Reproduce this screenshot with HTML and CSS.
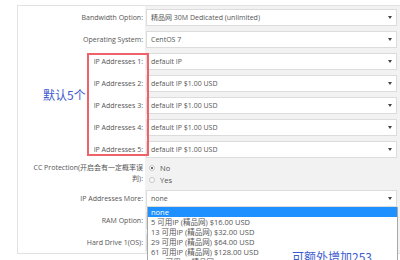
FILE: index.html
```html
<!DOCTYPE html>
<html>
<head>
<meta charset="utf-8">
<link rel="stylesheet" href="styles.css">
</head>
<body>
<div class="panel">
  <div class="row">
    <div class="label">Bandwidth Option:</div>
    <div class="field"><div class="select">精品网 30M Dedicated (unlimited)<span class="arrow"></span></div></div>
  </div>
  <div class="row">
    <div class="label">Operating System:</div>
    <div class="field"><div class="select">CentOS 7<span class="arrow"></span></div></div>
  </div>
  <div class="row">
    <div class="label">IP Addresses 1:</div>
    <div class="field"><div class="select">default IP<span class="arrow"></span></div></div>
  </div>
  <div class="row">
    <div class="label">IP Addresses 2:</div>
    <div class="field"><div class="select">default IP $1.00 USD<span class="arrow"></span></div></div>
  </div>
  <div class="row">
    <div class="label">IP Addresses 3:</div>
    <div class="field"><div class="select">default IP $1.00 USD<span class="arrow"></span></div></div>
  </div>
  <div class="row">
    <div class="label">IP Addresses 4:</div>
    <div class="field"><div class="select">default IP $1.00 USD<span class="arrow"></span></div></div>
  </div>
  <div class="row">
    <div class="label">IP Addresses 5:</div>
    <div class="field"><div class="select">default IP $1.00 USD<span class="arrow"></span></div></div>
  </div>
  <div class="row row-cc">
    <div class="label label-multi">CC Protection(开启会有一定概率误<br>判):</div>
    <div class="field radios">
      <div class="radio"><span class="dot checked"></span>No</div>
      <div class="radio"><span class="dot"></span>Yes</div>
    </div>
  </div>
  <div class="row">
    <div class="label">IP Addresses More:</div>
    <div class="field"><div class="select">none<span class="arrow"></span></div></div>
  </div>
  <div class="row">
    <div class="label">RAM Option:</div>
    <div class="field"><div class="select">&nbsp;<span class="arrow"></span></div></div>
  </div>
  <div class="row">
    <div class="label">Hard Drive 1(OS):</div>
    <div class="field"><div class="select">&nbsp;<span class="arrow"></span></div></div>
  </div>

  <div class="mark-box"></div>
  <div class="note note-left">默认5个</div>

  <ul class="dropdown">
    <li class="active">none</li>
    <li>5 可用IP (精品网) $16.00 USD</li>
    <li>13 可用IP (精品网) $32.00 USD</li>
    <li>29 可用IP (精品网) $64.00 USD</li>
    <li>61 可用IP (精品网) $128.00 USD</li>
    <li>125 可用IP (精品网) $256.00 USD</li>
  </ul>
  <div class="note note-right">可额外增加253</div>
</div>
</body>
</html>
```
FILE: styles.css
```css
html, body {
  margin: 0;
  padding: 0;
  background: #ffffff;
}
body {
  width: 400px;
  height: 260px;
  overflow: hidden;
  font-family: "Open Sans", "Noto Sans CJK SC", sans-serif;
  font-size: 7px;
  color: #555555;
}
.panel {
  position: relative;
  margin: 5px 0 0 17px;
  border: 1px solid #e2e2e2;
  border-right: none;
  background: #ffffff;
}
.row {
  display: grid;
  grid-template-columns: 127px 1fr;
  height: 22px;
}
.label {
  display: flex;
  align-items: center;
  justify-content: flex-end;
  padding-right: 2px;
  padding-top: 1px;
  text-align: right;
  white-space: nowrap;
}
.field {
  background: #f2f2f2;
  padding: 3px 3px 2px 1px;
}
.select {
  position: relative;
  box-sizing: border-box;
  height: 17px;
  line-height: 15px;
  border: 1px solid #dcdcdc;
  background: #ffffff;
  padding-left: 4px;
  color: #555555;
}
.arrow {
  position: absolute;
  right: 4px;
  top: 6px;
  width: 0;
  height: 0;
  border-left: 2px solid transparent;
  border-right: 2px solid transparent;
  border-top: 3px solid #444444;
}
.row-cc {
  height: 27px;
}
.label-multi {
  flex-direction: column;
  justify-content: flex-start;
  align-items: flex-end;
  line-height: 11px;
  padding-top: 2px;
}
.radios {
  padding-top: 2px;
  display: flex;
  flex-direction: column;
}
.radio {
  display: flex;
  align-items: center;
  height: 12px;
  padding-left: 3px;
  font-size: 7.5px;
}
.dot {
  box-sizing: border-box;
  width: 6px;
  height: 6px;
  border-radius: 50%;
  border: 1px solid #c8c8c8;
  background: #f8f8f8;
  margin-right: 5px;
  position: relative;
}
.dot.checked::after {
  content: "";
  position: absolute;
  left: 1px;
  top: 1px;
  width: 2px;
  height: 2px;
  border-radius: 50%;
  background: #444444;
}
.mark-box {
  position: absolute;
  left: 69px;
  top: 47px;
  width: 58px;
  height: 99px;
  border: 2px solid #f0626a;
}
.note {
  position: absolute;
  color: #3d5bd0;
  font-family: "Noto Sans CJK SC", "Open Sans", sans-serif;
  font-size: 12px;
  line-height: 14px;
  white-space: nowrap;
}
.note-left {
  left: 25px;
  top: 82px;
}
.note-right {
  left: 274px;
  top: 244px;
}
.dropdown {
  position: absolute;
  left: 129px;
  top: 201px;
  width: 249px;
  margin: 0;
  padding: 0;
  list-style: none;
  background: #ffffff;
  border: 1px solid #a8a8a8;
  border-top: none;
}
.dropdown li {
  height: 10px;
  line-height: 10px;
  padding-left: 3px;
  font-size: 7.5px;
  color: #555555;
  white-space: nowrap;
}
.dropdown li.active {
  background: #1e90ff;
  color: #ffffff;
}
```
